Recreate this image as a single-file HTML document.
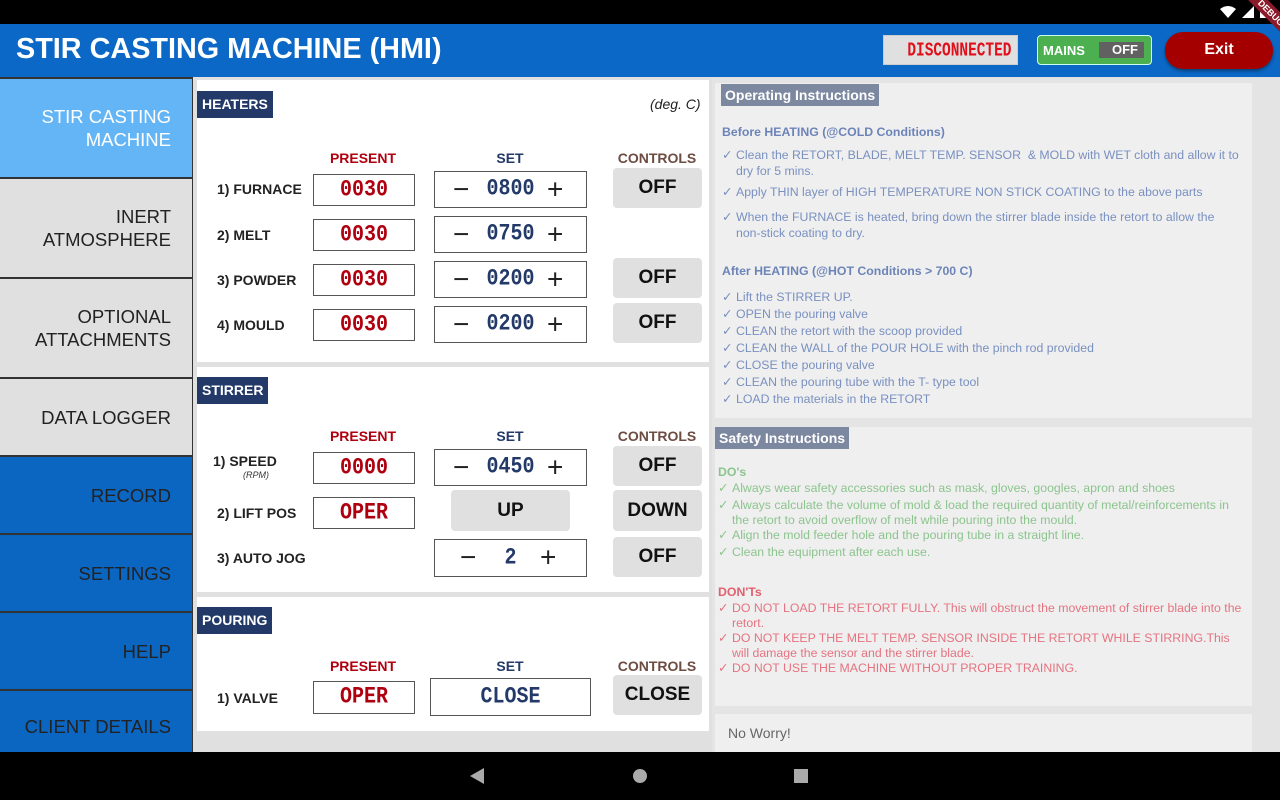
<!DOCTYPE html>
<html><head><meta charset="utf-8"><style>
*{margin:0;padding:0;box-sizing:border-box}
body{width:1280px;height:800px;overflow:hidden;background:#e0e0e0;font-family:"Liberation Sans",sans-serif;position:relative}
.a{position:absolute}
.nav{position:absolute;left:0;width:192px;text-align:right;padding-right:21px;font-size:18.5px;color:#222;display:flex;flex-direction:column;justify-content:center;align-items:flex-end;line-height:23px}
.pan{position:absolute;left:197px;width:512px;background:#fff}
.tag{position:absolute;left:197px;background:#233a68;color:#fff;font-weight:bold;font-size:14px;padding:0 5px;height:27px;line-height:27px}
.h{position:absolute;font-weight:bold;font-size:14px;transform:translateX(-50%)}
.lbl{position:absolute;font-weight:bold;font-size:14px;color:#222}
.box{position:absolute;border:1.5px solid #555;background:#fff;display:flex;align-items:center;justify-content:center}
.d{display:inline-block;font-family:"Liberation Mono",monospace;font-weight:bold;font-size:20px;transform:scale(1,1.15);letter-spacing:0}
.red{color:#b00010}.blu{color:#233a68}
.pm{font-family:"Liberation Sans",sans-serif;font-size:28px;color:#222;font-weight:300;position:absolute;top:50%;transform:translateY(-52%)}
.btn{position:absolute;background:#e0e0e0;border-radius:4px;display:flex;align-items:center;justify-content:center;font-weight:bold;font-size:19px;color:#111}
.ins{position:absolute;left:715px;width:537px;background:#efefef}
.ih{position:absolute;background:#7c87a0;color:#fff;font-weight:bold;font-size:14px;padding:0 4px;height:22px;line-height:22px}
.t{position:absolute;font-size:12.3px;line-height:17px}
.li{position:absolute;font-size:12.3px;line-height:15px;padding-left:14px}
.li::before{content:"✓";position:absolute;left:0}
</style></head><body>
<div class="a" style="left:0;top:0;width:1280px;height:24px;background:#000"></div>
<svg class="a" style="left:1218px;top:4px" width="50" height="16"><path d="M2 5 Q10 -1 18 5 L10 14Z" fill="#fff"/><path d="M24 14 L36 2 L36 14Z" fill="#fff"/><rect x="42" y="2" width="6" height="12" fill="#fff"/></svg>
<div class="a" style="left:0;top:24px;width:1280px;height:53px;background:#0b68c6"></div>
<div class="a" style="left:16px;top:33px;color:#fff;font-size:28.8px;font-weight:bold">STIR CASTING MACHINE (HMI)</div>
<div class="a" style="left:883px;top:35px;width:135px;height:30px;background:#e0e0e0;border:1px solid #ccc;overflow:hidden;text-align:right;padding-right:6px;line-height:30px"><span class="d" style="color:#e0101a;font-size:17px;transform-origin:right;transform:scale(.85,1.15)">DISCONNECTED</span></div>
<div class="a" style="left:1037px;top:35px;width:115px;height:30px;background:#4caf50;border:1px solid #cfe;border-radius:4px"></div>
<div class="a" style="left:1043px;top:43px;color:#fff;font-weight:bold;font-size:13px">MAINS</div>
<div class="a" style="left:1099px;top:42px;width:45px;height:16px;background:#616161;color:#fff;font-weight:bold;font-size:13px;text-align:right;padding-right:6px;line-height:16px">OFF</div>
<div class="a" style="left:1165px;top:32px;width:108px;height:37px;background:#a50000;border-radius:18px;color:#fff;font-weight:bold;font-size:16px;text-align:center;line-height:36px;box-shadow:0 2px 3px rgba(0,0,0,.4)">Exit</div>
<div class="a" style="left:1236px;top:6px;width:70px;height:14px;background:#8b1a2a;transform:rotate(45deg);color:#fff;font-size:9px;font-weight:bold;text-align:center;line-height:14px">DEBUG</div>

<div class="a" style="left:0;top:77px;width:193px;height:675px;background:#333"></div>
<div class="nav" style="top:79px;height:98px;background:#64b5f6;color:#fff">STIR CASTING<br>MACHINE</div>
<div class="nav" style="top:179px;height:98px;background:#e0e0e0">INERT<br>ATMOSPHERE</div>
<div class="nav" style="top:279px;height:98px;background:#e0e0e0">OPTIONAL<br>ATTACHMENTS</div>
<div class="nav" style="top:379px;height:76px;background:#e0e0e0">DATA LOGGER</div>
<div class="nav" style="top:457px;height:76px;background:#0b66c2">RECORD</div>
<div class="nav" style="top:535px;height:76px;background:#0b66c2">SETTINGS</div>
<div class="nav" style="top:613px;height:76px;background:#0b66c2">HELP</div>
<div class="nav" style="top:691px;height:61px;background:#0b66c2;padding-top:10px">CLIENT DETAILS</div>

<div class="pan" style="top:80px;height:282px"></div>
<div class="pan" style="top:367px;height:225px"></div>
<div class="pan" style="top:597px;height:134px"></div>

<div class="tag" style="top:91px">HEATERS</div>
<div class="a" style="left:650px;top:96px;font-style:italic;font-size:14px;color:#222">(deg. C)</div>
<div class="h red" style="left:363px;top:150px">PRESENT</div>
<div class="h blu" style="left:510px;top:150px">SET</div>
<div class="h" style="left:657px;top:150px;color:#6d4c41">CONTROLS</div>

<div class="lbl" style="left:217px;top:181px">1) FURNACE</div>
<div class="box red" style="left:313px;top:174px;width:102px;height:32px"><span class="d">0030</span></div>
<div class="box blu" style="left:434px;top:171px;width:153px;height:37px"><span class="pm" style="left:18px">−</span><span class="d">0800</span><span class="pm" style="left:112px">+</span></div>
<div class="btn" style="left:613px;top:168px;width:89px;height:40px">OFF</div>

<div class="lbl" style="left:217px;top:227px">2) MELT</div>
<div class="box red" style="left:313px;top:219px;width:102px;height:32px"><span class="d">0030</span></div>
<div class="box blu" style="left:434px;top:216px;width:153px;height:37px"><span class="pm" style="left:18px">−</span><span class="d">0750</span><span class="pm" style="left:112px">+</span></div>

<div class="lbl" style="left:217px;top:272px">3) POWDER</div>
<div class="box red" style="left:313px;top:264px;width:102px;height:32px"><span class="d">0030</span></div>
<div class="box blu" style="left:434px;top:261px;width:153px;height:37px"><span class="pm" style="left:18px">−</span><span class="d">0200</span><span class="pm" style="left:112px">+</span></div>
<div class="btn" style="left:613px;top:258px;width:89px;height:40px">OFF</div>

<div class="lbl" style="left:217px;top:317px">4) MOULD</div>
<div class="box red" style="left:313px;top:309px;width:102px;height:32px"><span class="d">0030</span></div>
<div class="box blu" style="left:434px;top:306px;width:153px;height:37px"><span class="pm" style="left:18px">−</span><span class="d">0200</span><span class="pm" style="left:112px">+</span></div>
<div class="btn" style="left:613px;top:303px;width:89px;height:40px">OFF</div>

<div class="tag" style="top:377px">STIRRER</div>
<div class="h red" style="left:363px;top:428px">PRESENT</div>
<div class="h blu" style="left:510px;top:428px">SET</div>
<div class="h" style="left:657px;top:428px;color:#6d4c41">CONTROLS</div>
<div class="lbl" style="left:213px;top:453px;font-size:14px">1) SPEED</div>
<div class="a" style="left:243px;top:470px;font-size:9px;font-style:italic;color:#333">(RPM)</div>
<div class="box red" style="left:313px;top:452px;width:102px;height:32px"><span class="d">0000</span></div>
<div class="box blu" style="left:434px;top:449px;width:153px;height:37px"><span class="pm" style="left:18px">−</span><span class="d">0450</span><span class="pm" style="left:112px">+</span></div>
<div class="btn" style="left:613px;top:446px;width:89px;height:40px">OFF</div>
<div class="lbl" style="left:217px;top:505px">2) LIFT POS</div>
<div class="box red" style="left:313px;top:497px;width:102px;height:32px"><span class="d">OPER</span></div>
<div class="btn" style="left:451px;top:490px;width:119px;height:41px">UP</div>
<div class="btn" style="left:613px;top:490px;width:89px;height:41px">DOWN</div>
<div class="lbl" style="left:217px;top:550px">3) AUTO JOG</div>
<div class="box blu" style="left:434px;top:539px;width:153px;height:38px"><span class="pm" style="left:25px">−</span><span class="d">2</span><span class="pm" style="left:105px">+</span></div>
<div class="btn" style="left:613px;top:537px;width:89px;height:40px">OFF</div>

<div class="tag" style="top:607px">POURING</div>
<div class="h red" style="left:363px;top:658px">PRESENT</div>
<div class="h blu" style="left:510px;top:658px">SET</div>
<div class="h" style="left:657px;top:658px;color:#6d4c41">CONTROLS</div>
<div class="lbl" style="left:217px;top:690px">1) VALVE</div>
<div class="box red" style="left:313px;top:681px;width:102px;height:33px"><span class="d">OPER</span></div>
<div class="box blu" style="left:430px;top:678px;width:161px;height:38px"><span class="d">CLOSE</span></div>
<div class="btn" style="left:613px;top:675px;width:89px;height:40px">CLOSE</div>

<div class="a" style="left:712px;top:78px;width:568px;height:674px;background:#e4e4e4"></div>
<div class="ins" style="top:83px;height:335px"></div>
<div class="ih" style="left:721px;top:84px">Operating Instructions</div>
<div class="t" style="left:722px;top:124px;color:#6c84b8;font-weight:bold">Before HEATING (@COLD Conditions)</div>
<div style="color:#7990c0">
<div class="li" style="left:722px;top:147px;width:525px;line-height:16px">Clean the RETORT, BLADE, MELT TEMP. SENSOR &nbsp;&amp; MOLD with WET cloth and allow it to dry for 5 mins.</div>
<div class="li" style="left:722px;top:185px;width:525px">Apply THIN layer of HIGH TEMPERATURE NON STICK COATING to the above parts</div>
<div class="li" style="left:722px;top:209px;width:515px;line-height:16px">When the FURNACE is heated, bring down the stirrer blade inside the retort to allow the non-stick coating to dry.</div>
<div class="t" style="left:722px;top:263px;font-weight:bold;color:#6c84b8">After HEATING (@HOT Conditions &gt; 700 C)</div>
<div class="li" style="left:722px;top:290px">Lift the STIRRER UP.</div>
<div class="li" style="left:722px;top:307px">OPEN the pouring valve</div>
<div class="li" style="left:722px;top:324px">CLEAN the retort with the scoop provided</div>
<div class="li" style="left:722px;top:341px">CLEAN the WALL of the POUR HOLE with the pinch rod provided</div>
<div class="li" style="left:722px;top:358px">CLOSE the pouring valve</div>
<div class="li" style="left:722px;top:375px">CLEAN the pouring tube with the T- type tool</div>
<div class="li" style="left:722px;top:392px">LOAD the materials in the RETORT</div>
</div>
<div class="ins" style="top:427px;height:279px"></div>
<div class="ih" style="left:715px;top:427px">Safety Instructions</div>
<div style="color:#8cc48e">
<div class="t" style="left:718px;top:464px;font-weight:bold">DO's</div>
<div class="li" style="left:718px;top:481px;width:532px">Always wear safety accessories such as mask, gloves, googles, apron and shoes</div>
<div class="li" style="left:718px;top:498px;width:525px">Always calculate the volume of mold &amp; load the required quantity of metal/reinforcements in the retort to avoid overflow of melt while pouring into the mould.</div>
<div class="li" style="left:718px;top:528px;width:532px">Align the mold feeder hole and the pouring tube in a straight line.</div>
<div class="li" style="left:718px;top:545px;width:532px">Clean the equipment after each use.</div>
</div>
<div style="color:#e57380">
<div class="t" style="left:718px;top:584px;font-weight:bold;color:#e0606e">DON'Ts</div>
<div class="li" style="left:718px;top:601px;width:535px">DO NOT LOAD THE RETORT FULLY. This will obstruct the movement of stirrer blade into the retort.</div>
<div class="li" style="left:718px;top:631px;width:532px">DO NOT KEEP THE MELT TEMP. SENSOR INSIDE THE RETORT WHILE STIRRING.This will damage the sensor and the stirrer blade.</div>
<div class="li" style="left:718px;top:661px;width:532px">DO NOT USE THE MACHINE WITHOUT PROPER TRAINING.</div>
</div>
<div class="ins" style="top:714px;height:38px"></div>
<div class="a" style="left:728px;top:725px;font-size:14px;color:#666">No Worry!</div>

<div class="a" style="left:0;top:752px;width:1280px;height:48px;background:#000"></div>
<svg class="a" style="left:468px;top:767px" width="345" height="18"><path d="M2 9 L16 1 L16 17Z" fill="#aaa"/><circle cx="172" cy="9" r="7" fill="#aaa"/><rect x="326" y="2" width="14" height="14" fill="#aaa"/></svg>
</body></html>
